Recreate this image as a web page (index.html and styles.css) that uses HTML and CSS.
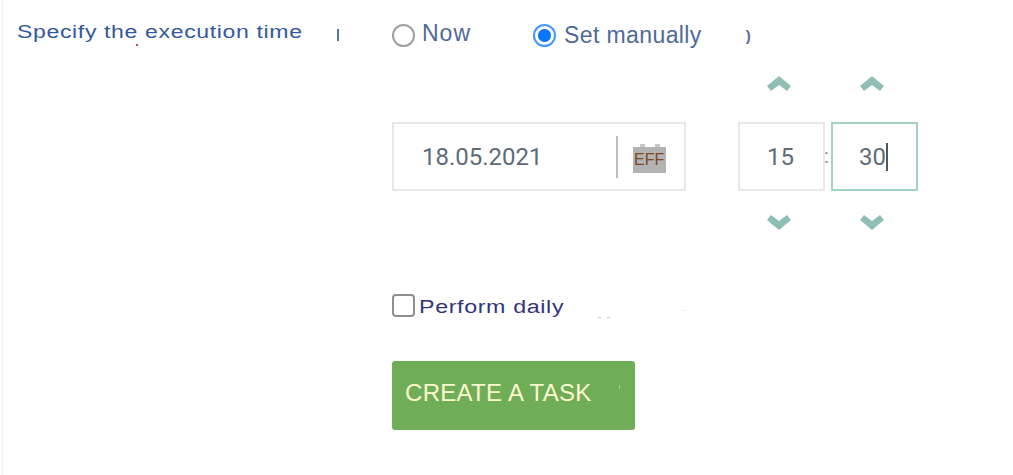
FILE: index.html
```html
<!DOCTYPE html>
<html lang="en">
  <head>
    <meta charset="UTF-8" />
    <title>Create a task</title>
    <link rel="stylesheet" href="styles.css">
  </head>
  <body>
    <div class="container">
      <div class="label-section">
        <span class="label-text">Specify the execution time</span>
        <span class="tick"></span>
        <span class="speck"></span>
      </div>
      <div class="form-section">
        <div class="radio-row">
          <label class="radio-item now"><input type="radio" name="when" /><span>Now</span></label>
          <label class="radio-item manual"><input type="radio" name="when" checked /><span>Set manually</span></label>
          <span class="paren">)</span>
        </div>

        <div class="date-time">
          <div class="date-box">
            <span class="date-value">18.05.2021</span>
            <span class="divider"></span>
            <span class="calendar">EFF</span>
          </div>
          <div class="time-col">
            <svg class="arrow" viewBox="0 0 24 15"><path d="M0 10 12 0l12 10-4 5-8-6-8 6z" /></svg>
            <div class="time-box">15</div>
            <svg class="arrow" viewBox="0 0 24 15"><path d="M0 5 12 15 24 5l-4-5-8 6-8-6z" /></svg>
          </div>
          <span class="colon">:</span>
          <div class="time-col">
            <svg class="arrow" viewBox="0 0 24 15"><path d="M0 10 12 0l12 10-4 5-8-6-8 6z" /></svg>
            <div class="time-box focused">30<span class="caret"></span></div>
            <svg class="arrow" viewBox="0 0 24 15"><path d="M0 5 12 15 24 5l-4-5-8 6-8-6z" /></svg>
          </div>
        </div>

        <label class="daily"><input type="checkbox" /><span>Perform daily</span></label>

        <button class="submit-btn" type="button">CREATE A TASK</button>
      </div>
    </div>
  </body>
</html>
```

FILE: styles.css
```css
* {
  box-sizing: border-box;
}

body {
  margin: 0;
  height: 475px;
  overflow: hidden;
  background-color: #fff;
  font-family: "Liberation Sans", Arial, sans-serif;
}

.container {
  display: flex;
  height: 100%;
  margin-left: 2px;
  border-left: 1px solid #f0f0f4;
}

.label-section {
  position: relative;
  width: 389px;
  padding: 22px 0 0 14px;
}

.label-text {
  display: inline-block;
  font-size: 18px;
  line-height: 20px;
  letter-spacing: 0.5px;
  color: #34589c;
  white-space: nowrap;
  transform: scaleX(1.28);
  transform-origin: left center;
}

.tick {
  position: absolute;
  left: 334px;
  top: 29px;
  width: 2px;
  height: 12px;
  background-color: #5a72ad;
}

.speck {
  position: absolute;
  left: 133px;
  top: 44px;
  width: 2px;
  height: 2px;
  background-color: #c0407a;
}

.form-section {
  display: flex;
  flex-direction: column;
  align-items: flex-start;
}

.radio-row {
  display: flex;
  align-items: center;
  height: 24px;
  margin-top: 23px;
  color: #4f6a96;
  font-size: 23px;
  letter-spacing: 0.4px;
}

.radio-item {
  display: flex;
  align-items: center;
  gap: 8px;
}

.radio-item input {
  appearance: none;
  width: 23px;
  height: 23px;
  margin: 0;
  border: 2.5px solid #a0a0a0;
  border-radius: 50%;
  background-color: #fff;
}

.radio-item input:checked {
  border-color: #3f97ff;
  background: radial-gradient(circle, #0a75ff 0 6px, #fff 7px);
}

.now {
  width: 141px;
}

.now span {
  margin: -4px 0 0 -1px;
  letter-spacing: 1px;
}

.paren {
  margin-left: 44px;
  font-size: 15px;
  font-weight: bold;
  color: #5d6f8a;
}

.date-time {
  display: flex;
  align-items: flex-start;
  margin-top: 29px;
}

.date-box {
  display: flex;
  align-items: center;
  width: 294px;
  height: 69px;
  margin: 46px 52px 0 0;
  padding-left: 28px;
  border: 2px solid #e8e8e8;
  font-family: Roboto, sans-serif;
  font-size: 24px;
  color: #5f6b78;
}

.date-value {
  width: 194px;
}

.divider {
  width: 2px;
  height: 42px;
  background-color: #bdbdbd;
}

.calendar {
  position: relative;
  width: 33px;
  height: 26px;
  margin: 6px 0 0 15px;
  padding-left: 1px;
  background-color: #b3b3b3;
  color: #7a4a24;
  font-family: "Liberation Sans", Arial, sans-serif;
  font-size: 16px;
  line-height: 25px;
}

.calendar::before,
.calendar::after {
  content: "";
  position: absolute;
  top: -3px;
  width: 5px;
  height: 3px;
  background-color: #c6c6c6;
}

.calendar::before {
  left: 7px;
}

.calendar::after {
  right: 6px;
}

.time-col {
  display: flex;
  flex-direction: column;
  align-items: center;
  width: 87px;
}

.arrow {
  width: 24px;
  height: 15px;
  margin-right: 5px;
  fill: #8fbfb4;
}

.time-box {
  display: flex;
  align-items: center;
  justify-content: center;
  width: 87px;
  height: 69px;
  margin: 31px 0 24px;
  padding-right: 2px;
  border: 2px solid #e8e8e8;
  font-family: Roboto, sans-serif;
  font-size: 24px;
  color: #5f6b78;
}

.time-box.focused {
  border-color: #a5d0c5;
}

.caret {
  width: 2px;
  height: 28px;
  background-color: #555;
}

.colon {
  width: 7px;
  margin: 68px 0 0 -1px;
  font-family: Roboto, sans-serif;
  font-size: 20px;
  color: #8a97a8;
}

.daily {
  position: relative;
  display: flex;
  align-items: center;
  gap: 4px;
  margin-top: 63px;
  color: #35337a;
  font-size: 18px;
  letter-spacing: 0.5px;
}

.daily span {
  margin-top: 4px;
  transform: scaleX(1.29);
  transform-origin: left center;
}

/* stray marks near the label */
.daily::after {
  content: "";
  position: absolute;
  left: 206px;
  top: 24px;
  width: 3px;
  height: 1px;
  background-color: #c8ccd4;
  box-shadow: 9px 0 0 #c8ccd4, 85px -7px 0 #dfe6ee;
}

.daily input {
  appearance: none;
  width: 23px;
  height: 23px;
  margin: 0;
  border: 2px solid #8f8f8f;
  border-radius: 4px;
  background-color: #fff;
}

.submit-btn {
  position: relative;
  width: 243px;
  height: 69px;
  margin-top: 43px;
  padding: 0 0 5px 13px;
  border: none;
  border-radius: 3px;
  background-color: #70ad57;
  color: #fdf9cf;
  font-family: "Liberation Sans", Arial, sans-serif;
  font-size: 24px;
  letter-spacing: 0.3px;
  text-align: left;
}

.submit-btn::after {
  content: "";
  position: absolute;
  left: 227px;
  top: 24px;
  width: 1px;
  height: 4px;
  background-color: #a9cf97;
}
```
